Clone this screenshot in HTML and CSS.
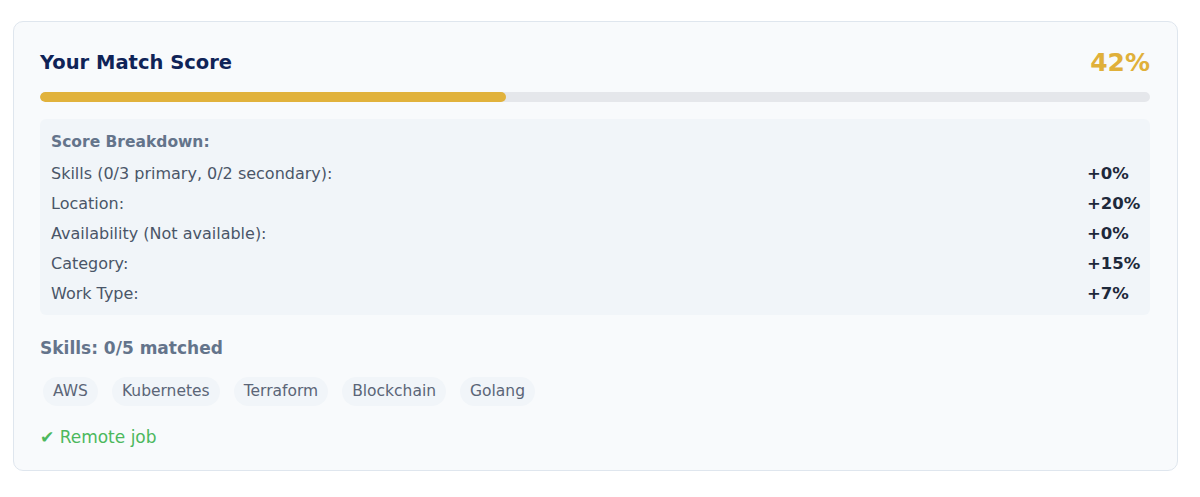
FILE: index.html
```html
<!DOCTYPE html>
<html>
<head>
  <meta charset="UTF-8" />
  <meta name="viewport" content="width=device-width, initial-scale=1.0" />
  <title>Match Score</title>
  <link rel="stylesheet" href="styles.css">
</head>
<body>
  <div class="match-card">
    <div class="match-header">
      <h2 class="match-title">Your Match Score</h2>
      <span class="match-percent">42%</span>
    </div>

    <div class="progress">
      <div class="progress-fill" style="width: 42%"></div>
    </div>

    <div class="breakdown">
      <div class="breakdown-title">Score Breakdown:</div>
      <div class="breakdown-row">
        <span>Skills (0/3 primary, 0/2 secondary):</span>
        <span class="points">+0%</span>
      </div>
      <div class="breakdown-row">
        <span>Location:</span>
        <span class="points">+20%</span>
      </div>
      <div class="breakdown-row">
        <span>Availability (Not available):</span>
        <span class="points">+0%</span>
      </div>
      <div class="breakdown-row">
        <span>Category:</span>
        <span class="points">+15%</span>
      </div>
      <div class="breakdown-row">
        <span>Work Type:</span>
        <span class="points">+7%</span>
      </div>
    </div>

    <div class="skills-title">Skills: 0/5 matched</div>
    <div class="skill-tags">
      <span class="tag">AWS</span>
      <span class="tag">Kubernetes</span>
      <span class="tag">Terraform</span>
      <span class="tag">Blockchain</span>
      <span class="tag">Golang</span>
    </div>

    <div class="remote">✔ Remote job</div>
  </div>
</body>
</html>
```

FILE: styles.css
```css
body {
  margin: 0;
  padding: 21px 22px 0 13px;
  font-family: "DejaVu Sans", Verdana, sans-serif;
  background-color: #fff;
  color: #4a5568;
}

.match-card {
  background-color: #f8fafc;
  border: 1px solid #dfe6ee;
  border-radius: 10px;
  padding: 22px 27px 22px 26px;
}

.match-header {
  display: flex;
  justify-content: space-between;
  align-items: center;
  height: 36px;
}

.match-title {
  margin: 0;
  font-size: 19.5px;
  font-weight: bold;
  color: #0f2357;
}

.match-percent {
  font-size: 25px;
  font-weight: bold;
  color: #e0b03a;
}

.progress {
  margin-top: 12px;
  height: 10px;
  border-radius: 5px;
  background-color: #e5e7eb;
  overflow: hidden;
}

.progress-fill {
  height: 100%;
  border-radius: 5px;
  background-color: #e1b23c;
}

.breakdown {
  margin-top: 17px;
  padding: 10px 9px 6px 11px;
  background-color: #f1f5f9;
  border-radius: 6px;
  font-size: 16px;
}

.breakdown-title {
  font-size: 15.5px;
  font-weight: bold;
  color: #64748b;
  height: 26px;
  line-height: 26px;
  margin-bottom: 4px;
}

.breakdown-row {
  display: flex;
  justify-content: space-between;
  height: 30px;
  line-height: 30px;
}

.points {
  width: 54px;
  font-size: 16.5px;
  font-weight: bold;
  color: #1e293b;
}

.skills-title {
  margin-top: 22px;
  font-size: 17px;
  line-height: 22px;
  font-weight: bold;
  color: #64748b;
}

.skill-tags {
  display: flex;
  gap: 14px;
  margin-top: 18px;
  padding-left: 3px;
}

.tag {
  padding: 0 10px;
  height: 29px;
  line-height: 29px;
  border-radius: 15px;
  background-color: #f1f5f9;
  font-size: 15.5px;
  color: #5b6577;
}

.remote {
  margin-top: 20px;
  font-size: 17px;
  line-height: 22px;
  color: #4cb85c;
}
```
